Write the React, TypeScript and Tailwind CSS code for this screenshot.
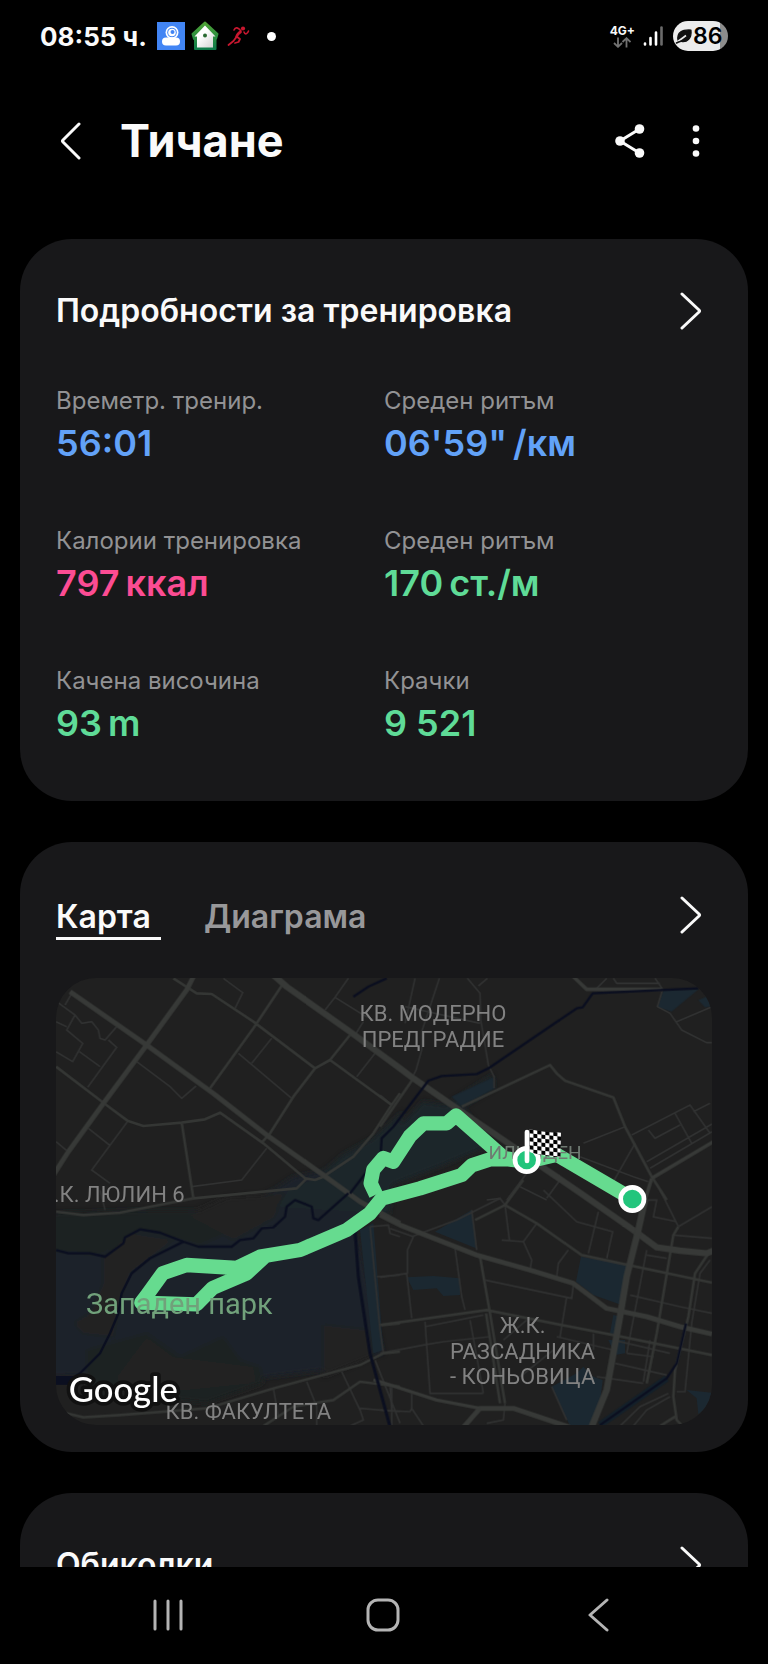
import type { ReactNode } from "react";

type Stat = { label: string; value: string; unit?: string; color: string };

const stats: Stat[] = [
  { label: "Времетр. тренир.", value: "56:01", color: "text-[#62a2f8]" },
  { label: "Среден ритъм", value: "06'59\"", unit: "/км", color: "text-[#62a2f8]" },
  { label: "Калории тренировка", value: "797", unit: "ккал", color: "text-[#fc4c93]" },
  { label: "Среден ритъм", value: "170", unit: "ст./м", color: "text-[#5fdb97]" },
  { label: "Качена височина", value: "93", unit: "m", color: "text-[#5fdb97]" },
  { label: "Крачки", value: "9 521", color: "text-[#5fdb97]" },
];

function Card({ children, className = "" }: { children: ReactNode; className?: string }) {
  return (
    <section className={`rounded-[52px] bg-[#18181a] px-9 pt-12 ${className}`}>
      {children}
    </section>
  );
}

function ChevronRight() {
  return (
    <svg className="h-10 w-6" viewBox="0 0 24 40" fill="none" stroke="currentColor" strokeWidth="3" strokeLinecap="round" strokeLinejoin="round">
      <path d="M2 3 L19 19 Q20 20 19 21 L2 37" />
    </svg>
  );
}

function OpenButton({ label }: { label: string }) {
  return (
    <button type="button" aria-label={label} className="mr-2 text-[#fafafa]">
      <ChevronRight />
    </button>
  );
}

function StatusBar() {
  return (
    <div className="flex h-[72px] items-center justify-between px-10">
      <div className="flex items-center">
        <span className="text-[26px] font-bold">08:55 ч.</span>
        <svg className="ml-[10px] h-7 w-7" viewBox="0 0 28 28">
          <rect width="28" height="28" fill="#4285f4" />
          <circle cx="15" cy="10.500" r="6.500" fill="#fff" />
          <circle cx="15" cy="10.500" r="4.800" fill="#4285f4" />
          <circle cx="15" cy="10.500" r="3.800" fill="#fff" />
          <circle cx="15.500" cy="10" r="2" fill="#4285f4" />
          <rect x="5" y="15.500" width="18" height="8" rx="4" fill="#fff" />
        </svg>
        <svg className="ml-1.5 h-[30px] w-7" viewBox="0 0 28 30">
          <defs>
            <linearGradient id="house" x1="0" y1="0" x2="0" y2="1">
              <stop offset="0" stopColor="#4fa335" />
              <stop offset="1" stopColor="#0f7b4a" />
            </linearGradient>
            <linearGradient id="wall" x1="0" y1="0" x2="1" y2="1">
              <stop offset="0.4" stopColor="#fff" />
              <stop offset="1" stopColor="#cfcfcf" />
            </linearGradient>
          </defs>
          <path d="M14 1.500 L26.500 13 L25 18 H24.500 V28 H4 V18 H3 L1.500 13Z" fill="url(#house)" stroke="url(#house)" strokeWidth="2" strokeLinejoin="round" />
          <path d="M14 4.500 L24.500 15.500 H22 V26.500 H6 V15.500 H3.500Z" fill="url(#wall)" />
          <circle cx="14" cy="14.500" r="2" fill="#2b6b33" />
        </svg>
        <svg className="ml-2 h-6 w-6" viewBox="0 0 24 24" fill="none" stroke="#c8172f" strokeLinecap="round" strokeLinejoin="round">
          <circle cx="16" cy="4.500" r="2.100" fill="#c8172f" stroke="none" />
          <path d="M17 8 C18 11 20.500 10 21.500 7" strokeWidth="1.600" />
          <path d="M7 6 C8.500 2.500 11 3.500 14 7" strokeWidth="1.600" />
          <path d="M13.500 8 C11.500 9 10 11 9.500 13" strokeWidth="2.600" />
          <path d="M9.500 12.500 L13 15 L11.500 18 L8 19" strokeWidth="1.800" />
          <path d="M9 13.500 L6.500 17 L1.500 21" strokeWidth="1.800" />
        </svg>
        <span className="ml-4 h-[9px] w-[9px] rounded-full bg-white" />
      </div>

      <div className="flex items-center">
        <div className="flex flex-col items-center">
          <span className="text-xs leading-[13px] font-bold">4G+</span>
          <svg className="h-[11px] w-[18px]" viewBox="0 0 18 11" fill="none" stroke="#737373" strokeWidth="1.800">
            <path d="M5 0.500 V9.500 M1 6 L5 9.800 L9 6" />
            <path d="M13.500 10.500 V1.500 M9.500 5 L13.500 1.200 L17.500 5" />
          </svg>
        </div>
        <svg className="ml-2 h-[22px] w-5" viewBox="0 0 20 22" strokeWidth="2.600" strokeLinecap="round">
          <path d="M2 18.500 V19.500 M7.500 13 V19.500 M13 7.500 V19.500" stroke="#fff" />
          <path d="M18.500 2.500 V19.500" stroke="#6b6b6b" />
        </svg>
        <div className="ml-[10px] flex h-[30px] w-[55px] items-center overflow-hidden rounded-full bg-linear-to-r from-[#ececec] from-86% to-[#8c8c8c] to-86% text-black">
          <svg className="ml-[2px] h-5 w-[18px] shrink-0" viewBox="0 0 18 20">
            <path d="M3 14.500 C1.500 6 7 3.500 16 4 C17 12.500 12 16.500 6.500 15.500Z" fill="#111" stroke="#111" strokeWidth="1.200" strokeLinejoin="round" />
            <path d="M1.500 16.500 L11 9.500" stroke="#ececec" strokeWidth="1.600" />
            <path d="M1.500 17 C4 15.500 5 15.500 7 15" fill="none" stroke="#111" strokeWidth="1.600" strokeLinecap="round" />
          </svg>
          <span className="text-[23px] leading-[30px] font-semibold">86</span>
        </div>
      </div>
    </div>
  );
}

function Header() {
  return (
    <header className="flex h-[138px] items-center px-[60px]">
      <button type="button" aria-label="Назад">
        <svg className="h-10 w-6" viewBox="0 0 24 40" fill="none" stroke="#fafafa" strokeWidth="3" strokeLinecap="round" strokeLinejoin="round">
          <path d="M19 3 L3 19 Q2 20 3 21 L19 37" />
        </svg>
      </button>
      <h1 className="ml-9 text-[45px] leading-[56px] font-bold">Тичане</h1>
      <button type="button" aria-label="Споделяне" className="ml-auto">
        <svg className="h-9 w-8" viewBox="0 0 32 36" fill="#fafafa">
          <path d="M25.500 6 L6 18 L25.500 30" fill="none" stroke="#fafafa" strokeWidth="3" />
          <circle cx="25.500" cy="6" r="4.800" />
          <circle cx="6" cy="18" r="4.800" />
          <circle cx="25.500" cy="30" r="4.800" />
        </svg>
      </button>
      <button type="button" aria-label="Още опции" className="ml-[38px]">
        <svg className="h-9 w-6" viewBox="0 0 24 36" fill="#fafafa">
          <circle cx="12" cy="5.500" r="3.300" />
          <circle cx="12" cy="18" r="3.300" />
          <circle cx="12" cy="30.500" r="3.300" />
        </svg>
      </button>
    </header>
  );
}

// The map is drawn at three units per pixel, in four quarters.
function MapView() {
  return (
    <svg className="mt-[38px] block h-auto w-full rounded-[40px]" viewBox="0 0 1968 1341" role="img" aria-label="Карта на маршрута">
      <defs>
        <pattern id="checks" width="24" height="24" patternUnits="userSpaceOnUse" patternTransform="translate(448 508) skewY(6)">
          <rect width="24" height="24" fill="#fff" />
          <path d="M0 0h12v12H0z M12 12h12v12H12z" fill="#000" />
        </pattern>
        <filter id="soft" x="-10%" y="-10%" width="120%" height="120%">
          <feGaussianBlur stdDeviation="8" />
        </filter>
      </defs>
      <rect width="1968" height="1341" fill="#202020" />

      {/* parks */}
      <g filter="url(#soft)">
        <g transform="translate(-48 636)">
          <path d="M0 70 L300 60 L560 60 L700 0 L760 -40 L860 -60 L1000 60 L950 120 L1030 490 L860 540 L660 565 L640 540 L0 560Z" fill="#1a242a" />
          <path d="M0 70 L440 60 L560 130 L480 165 L300 118 L250 150 L180 195 L0 180Z" fill="#1e2323" />
          <path d="M270 130 L400 150 L270 250 L240 330 L220 440 L130 430 L100 400 L150 370 L190 280 L190 200Z" fill="#202121" />
          <path d="M440 75 L580 150 L700 85 L740 10 L560 20Z" fill="#202121" />
          <path d="M850 405 L985 420 L1000 500 L850 560Z" fill="#202121" />
          <path d="M140 480 L320 430 L420 500 L550 440 L600 510 L660 530 L670 580 L500 640 L140 600Z" fill="#1e2221" />
          <path d="M320 440 L400 500 L560 520 L640 530 L650 580 L250 620 L230 560Z" fill="#202121" />
        </g>
        <path d="M1040 400 L950 480 L860 530 L780 600 L700 630 L660 690 L1000 710Z" fill="#1b2529" />
        <path d="M960 520 L1100 370 L1170 380 L1310 290 L1315 330 L1220 386 L1310 500 L1152 566 L960 640Z" fill="#1b252b" />
      </g>
      <g transform="translate(972 -54)" fill="#1b2831">
        <path d="M850 90 L955 88 L875 155 L832 142Z M955 120 L990 105 L996 140 L975 142Z" />
        <path d="M215 410 L340 352 L345 385 L245 438Z" />
      </g>
      <g transform="translate(972 636)" fill="#1b2831">
        <path d="M165 125 L275 60 L288 175Z" />
        <path d="M80 262 L160 258 L240 265 L240 315 L190 318 L170 295 L100 300Z" />
        <path d="M603 200 L745 225 L725 345 L640 315 L588 275Z" />
        <path d="M700 375 L722 380 L705 435 L690 430Z M685 450 L735 450 L735 490 L705 495Z" />
        <path d="M515 590 L590 550 L610 530 L640 560 L668 570 L660 640 L630 705 L570 708Z" />
        <path d="M920 600 L994 608 L985 650 L955 672 L950 625Z" />
        <path d="M-60 120 L-20 100 L10 480 L-20 490Z" />
      </g>

      {/* small streets */}
      <g fill="none" stroke="#313232" strokeWidth="5">
        <path
          transform="translate(-48 -54)"
          d="M550 55 L608 98 L585 145 M925 55 L885 112 L855 150 M885 112 L970 165 L1000 180 M970 185 L945 225 M695 235 L635 310 M595 280 L755 415 M1005 280 L950 350 M95 100 L75 135 M50 125 L105 165 L80 210 L128 250 L98 305 L48 275 M105 165 L125 190 L155 185 L175 210 L180 235 L195 240 L230 200 M205 240 L230 262 L143 382 M118 275 L180 320 M48 185 L80 200 M290 305 L390 380 L425 415 L468 378 M145 505 L208 555 M262 485 L155 630 L210 670 M48 545 L80 572 M455 680 L605 660 L680 565"
        />
        <path
          transform="translate(972 -54)"
          d="M105 55 L75 190 M178 55 L125 215 L125 270 L108 330 L98 350 M75 140 L300 190 M262 55 L300 100 L302 180 L325 315 L342 350 L342 385 M295 78 L322 55 M0 405 L35 435 M735 500 L610 550 M700 55 L710 70 L840 70 M650 85 L680 55 M825 55 L848 88 L832 140 L870 160 L905 210 L980 248 L996 248 M890 185 L996 140 M755 525 L930 435 L990 520 M885 460 L935 550 M805 510 L825 535 L900 495 M940 455 L990 430 M800 605 L996 492 M810 625 L996 515 M765 550 L700 665 M600 590 L760 650 L805 665 M440 640 L380 720 M420 680 L500 720 M540 660 L500 715 M320 720 L360 715"
        />
        <path
          transform="translate(-48 636)"
          d="M195 60 L180 0 M700 595 L715 680 M800 575 L830 650 L830 708 M905 545 L960 660 L970 690 L930 708 M960 655 L1080 665 M1005 510 L1080 700 M1055 590 L1055 708 M990 110 L1020 420 L1030 490 M990 110 L1045 105 L1050 130 L1080 140 M1010 260 L1080 255"
        />
        <path
          transform="translate(972 636)"
          d="M375 45 L388 150 M365 150 L430 155 L455 210 L450 240 M430 155 L470 100 M275 60 L290 180 M95 140 L230 90 L360 25 L375 45 M30 115 L100 140 L82 180 L82 250 L0 262 M80 250 L95 385 M225 175 L245 320 L255 360 M315 270 L575 325 L580 285 M560 320 L540 440 M565 180 L535 220 L530 260 M490 0 L590 95 L698 125 L680 205 M655 65 L625 190 M895 110 L996 50 M840 0 L895 110 M800 30 L830 30 L820 80 L890 95 M880 135 L996 145 M800 180 L740 490 M800 195 L860 205 M750 315 L900 350 L996 370 M705 520 L860 555 M700 450 L870 490 M740 490 L820 500 M810 450 L790 575 M990 210 L960 250 L935 400 L915 605 L890 605 M0 490 L130 465 L190 455 L330 440 M135 395 L150 610 L310 610 M135 410 L310 375 M270 390 L310 610 M30 590 L35 660 M95 610 L95 655 L130 708 M0 660 L90 665 L95 655 M515 590 L560 690 M370 450 L440 390 M420 560 L520 480 M530 440 L700 480 M640 430 L640 480 M650 560 L790 580 M870 620 L800 660 L760 708 M865 610 L780 650 L720 708 M320 700 L370 690 L375 640"
        />
      </g>

      {/* streets */}
      <g fill="none" stroke="#343634" strokeWidth="8" strokeLinejoin="round">
        <path
          transform="translate(-48 -54)"
          d="M400 55 L470 100 L515 102 L640 185 L825 325 L870 300 L930 225 M730 70 L640 205 L510 385 M825 325 L760 410 L690 520 L665 548 M870 300 L1055 435 L1080 400 M1055 435 L1000 520 L940 590 L850 650 L825 660 L795 655 L670 550 L540 458 L495 478 L425 488 L310 498 L262 482 L195 432 L48 320 M425 488 L460 715 L770 685 L800 655"
        />
        <path
          transform="translate(972 -54)"
          d="M100 355 L0 500 M245 440 L510 315 L530 340 L555 362 L700 412 L735 500 L815 650 L860 720"
        />
        <path
          transform="translate(-48 636)"
          d="M48 65 L130 75 L240 68 L460 25 M60 665 L130 682 L240 675 L500 655 L700 595 L960 525 L1030 490 L1080 485 M670 708 L760 650 L880 630 L960 575 L1080 590 M1025 405 L1080 400"
        />
        <path
          transform="translate(972 636)"
          d="M375 45 L430 -30 M285 90 L375 45 M375 45 L470 100 L605 195 L745 225 L996 278 M300 200 L330 370 L375 640 M318 370 L360 640 M0 405 L320 360 L545 405 L700 435 L996 495 M895 110 L880 135 L830 430 L800 580 M985 190 L945 250 L925 380 L885 540 L880 620 L890 690 L905 705 M885 680 L840 708"
        />
      </g>

      {/* avenues */}
      <g fill="none" stroke="#373937" strokeWidth="15" strokeLinejoin="round">
        <path transform="translate(-48 -54)" d="M90 95 L320 255 L520 400 L680 525 L850 645 L960 725 L1080 790 M460 50 L440 90 L320 255 L190 430 L85 575 L40 645" />
        <path transform="translate(-48 -54)" strokeWidth="19" d="M700 45 L740 80 L930 215 L1080 325 L1120 355 L1250 445 L1420 560 L1520 630 L1630 705 L1780 810 L1850 862 L1920 872 L2000 880 L2020 872" />
        <path transform="translate(972 -54)" d="M580 50 L620 88 L845 88 M815 655 L1000 545 M815 655 L795 720" strokeWidth="11" />
        <path transform="translate(972 636)" d="M0 75 L60 105 L290 195 L450 240 L580 280 L680 355 L800 380 L900 410 L996 432 M250 712 L300 655 L400 655 L570 712" />
        <path transform="translate(972 636)" d="M795 30 L775 120 L740 260 L720 380 L680 600 L635 710" strokeWidth="20" />
        <path transform="translate(972 636)" d="M-20 570 L0 575 L170 630 L300 655" strokeWidth="10" />
      </g>

      {/* rivers */}
      <g fill="none" stroke="#0b0f20" strokeWidth="7" strokeLinejoin="round">
        <path transform="translate(972 -54)" d="M955 85 L638 100 L608 142 L590 145 L325 325 L290 342 L185 348 L145 362 L40 500 L5 535 L2 580 L-90 700" />
        <path transform="translate(-48 -54)" d="M940 110 L985 80 L1040 55" />
        <path transform="translate(-48 636)" d="M925 10 L835 90 L820 85 L815 50 L765 30 L740 50 L735 80 L700 112 L665 115 L640 145 L600 150 L575 170 L475 170 L430 155 L360 128 L300 118 L255 142 L250 160 L195 200 L150 190 L85 190 L48 180" />
        <path transform="translate(-48 636)" d="M430 155 L330 205 L275 250 L245 310 L235 370 L210 430 L180 490 L120 550 L85 575" />
        <path transform="translate(-48 636)" d="M40 572 L100 572" strokeWidth="26" />
        <path transform="translate(-48 636)" d="M945 120 L955 260 L990 490 L1050 710" strokeWidth="9" />
        <path transform="translate(972 636)" d="M660 705 L860 565" stroke="#14202a" strokeWidth="20" />
        <path transform="translate(972 636)" d="M918 400 L890 520 L860 565 L660 705" />
      </g>

      {/* route */}
      <g fill="none" stroke="#66db8f" strokeWidth="43" strokeLinejoin="round">
        <path d="M1729 663 L1502 530 L1412 551 L1345 540 L1200 412 L1172 436 L1102 436 L1062 474 L1012 551 L982 540 L952 575 L944 616 L960 650" />
        <path d="M1412 551 L1357 544 L1302 544 L1247 562 L1217 591 L1092 631 L977 662 L942 706 L872 756 L732 816 L612 836 L542 870 L392 861 L320 886 L274 950 L256 974 L422 979 L470 930 L572 886 L632 830" />
      </g>

      {/* place names */}
      <g className="font-['Roboto']" fill="#828282" fontSize="66" textAnchor="middle">
        <text x="1131" y="129">КВ. МОДЕРНО</text>
        <text x="1131" y="206">ПРЕДГРАДИЕ</text>
        <text x="1437" y="542" fontSize="57" fill="#6f7a72">ИЛИНДЕН</text>
        <text x="386" y="673" textAnchor="end">.К. ЛЮЛИН 6</text>
        <text x="370" y="1007" fontSize="87" fill="#71a17b">Западен парк</text>
        <text x="577" y="1322">КВ. ФАКУЛТЕТА</text>
        <text x="1400" y="1065">Ж.К.</text>
        <text x="1400" y="1142">РАЗСАДНИКА</text>
        <text x="1400" y="1219">- КОНЬОВИЦА</text>
      </g>
      <text x="38" y="1273" className="font-['Lato'] font-medium" fontSize="104" fill="#fff" stroke="#111" strokeWidth="22" strokeLinejoin="round" paintOrder="stroke">
        Google
      </text>

      {/* start and finish */}
      <g transform="translate(972 -54)">
        <circle cx="757" cy="717" r="35" fill="#22c57c" stroke="#fff" strokeWidth="14" />
        <circle cx="440" cy="600" r="35" fill="#22c57c" stroke="#fff" strokeWidth="14" />
        <path d="M448 508 C480 512 505 522 543 515 L541 592 C505 590 480 585 448 576Z" fill="url(#checks)" />
        <path d="M441 516 V603" stroke="#fff" strokeWidth="14" strokeLinecap="round" />
      </g>
    </svg>
  );
}

function NavBar() {
  return (
    <nav className="grid h-[97px] shrink-0 grid-cols-3 items-center px-[60px] text-[#b4b4b4]">
      <button type="button" aria-label="Последни" className="flex justify-center">
        <svg className="h-9 w-9" viewBox="0 0 36 36" stroke="currentColor" strokeWidth="3" strokeLinecap="round">
          <path d="M5 3 V31 M18 3 V31 M31 3 V31" />
        </svg>
      </button>
      <button type="button" aria-label="Начало" className="flex justify-center">
        <svg className="h-9 w-9" viewBox="0 0 36 36" fill="none" stroke="currentColor" strokeWidth="3">
          <rect x="2" y="2" width="30" height="30" rx="10" />
        </svg>
      </button>
      <button type="button" aria-label="Назад" className="flex justify-center">
        <svg className="h-9 w-9" viewBox="0 0 36 36" fill="none" stroke="currentColor" strokeWidth="3" strokeLinecap="round" strokeLinejoin="round">
          <path d="M25 2 L8 17 L25 32" />
        </svg>
      </button>
    </nav>
  );
}

export default function App() {
  return (
    <div lang="bg" className="flex h-screen flex-col bg-black font-['Inter',sans-serif] text-[#fafafa]">
      <StatusBar />
      <Header />

      <main className="flex min-h-0 flex-1 flex-col gap-[41px] overflow-hidden px-5 pt-[29px] *:shrink-0">
        {/* Workout details */}
        <Card className="pb-[54px]">
          <div className="flex h-12 items-center justify-between">
            <h2 className="text-[32px] leading-10 font-semibold">Подробности за тренировка</h2>
            <OpenButton label="Подробности за тренировка" />
          </div>
          <dl className="mt-[50px] grid grid-cols-2 gap-y-[58px]">
            {stats.map((s, i) => (
              <div key={i}>
                <dt className="text-2xl leading-8 text-[#929294]">{s.label}</dt>
                <dd className={`mt-[2px] flex gap-1.5 text-[36px] leading-[48px] font-semibold ${s.color}`}>
                  <span>{s.value}</span>
                  {s.unit && <span>{s.unit}</span>}
                </dd>
              </div>
            ))}
          </dl>
        </Card>

        {/* Map */}
        <Card className="pb-[27px]">
          <div className="flex items-center justify-between">
            <div className="flex gap-[43px] text-[32px] leading-10 font-semibold">
              <button type="button" className="min-w-[105px] border-b-[3px] border-[#fafafa] pt-[7px] text-left">
                Карта
              </button>
              <button type="button" className="border-b-[3px] border-transparent pt-[7px] text-[#98989a]">
                Диаграма
              </button>
            </div>
            <OpenButton label="Отваряне на картата" />
          </div>
          <MapView />
        </Card>

        {/* Laps */}
        <Card className="pb-12">
          <div className="flex h-12 items-center justify-between">
            <h2 className="text-[32px] leading-10 font-semibold">Обиколки</h2>
            <OpenButton label="Обиколки" />
          </div>
        </Card>
      </main>

      <NavBar />
    </div>
  );
}
